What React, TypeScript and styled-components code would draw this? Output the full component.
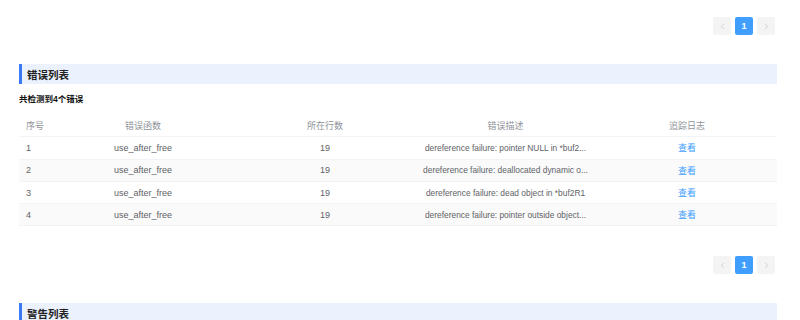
import React from 'react'
import styled, { createGlobalStyle } from 'styled-components'
import { ChevronLeft, ChevronRight } from 'lucide-react'

const GlobalStyle = createGlobalStyle`
  body {
    margin: 0;
    background: #fff;
    font-family: "Liberation Sans", "Noto Sans CJK SC", sans-serif;
  }
`

const Page = styled.div`
  padding: 17px 23px 0 19px;
`

const Pager = styled.div<{ $mb: number }>`
  display: flex;
  justify-content: flex-end;
  gap: 4px;
  padding-right: 2px;
  margin-bottom: ${(p) => p.$mb}px;
`

const PageBtn = styled.div<{ $active?: boolean }>`
  width: 18px;
  height: 18px;
  border-radius: 2px;
  display: flex;
  align-items: center;
  justify-content: center;
  font-size: 9px;
  font-weight: bold;
  background: ${(p) => (p.$active ? '#409eff' : '#f4f4f5')};
  color: ${(p) => (p.$active ? '#fff' : '#c0c4cc')};
`

const SectionTitle = styled.div`
  height: 20px;
  display: flex;
  align-items: center;
  padding-left: 5px;
  border-left: 3px solid #3a7af5;
  background: #ebf1fd;
  font-size: 10.5px;
  font-weight: bold;
  color: #222;
`

const Summary = styled.div`
  margin-top: 8px;
  line-height: 14px;
  font-size: 8.5px;
  font-weight: bold;
  color: #111;
`

const Table = styled.div`
  margin-top: 9px;
  margin-bottom: 30px;
`

const Row = styled.div<{ $striped?: boolean; $head?: boolean }>`
  display: grid;
  grid-template-columns: 31px 186px 178px 183px 180px;
  height: 22.3px;
  align-items: center;
  background: ${(p) => (p.$striped ? '#fafafa' : '#fff')};
  border-bottom: 1px solid #f2f3f6;
  font-size: 9px;
  color: ${(p) => (p.$head ? '#909399' : '#606266')};
  box-sizing: border-box;
`

const Cell = styled.div<{ $left?: boolean }>`
  padding: 0 ${(p) => (p.$left ? '0 0 7px' : '4px')};
  text-align: ${(p) => (p.$left ? 'left' : 'center')};
  white-space: nowrap;
`

const Desc = styled.span`
  font-size: 8.4px;
`

const Link = styled.span`
  color: #409eff;
  cursor: pointer;
`

const errors = [
  { fn: 'use_after_free', line: 19, desc: 'dereference failure: pointer NULL in *buf2...' },
  { fn: 'use_after_free', line: 19, desc: 'dereference failure: deallocated dynamic o...' },
  { fn: 'use_after_free', line: 19, desc: 'dereference failure: dead object in *buf2R1' },
  { fn: 'use_after_free', line: 19, desc: 'dereference failure: pointer outside object...' },
]

const Pagination = ({ mb }: { mb: number }) => (
  <Pager $mb={mb}>
    <PageBtn>
      <ChevronLeft size={9} strokeWidth={2} />
    </PageBtn>
    <PageBtn $active>1</PageBtn>
    <PageBtn>
      <ChevronRight size={9} strokeWidth={2} />
    </PageBtn>
  </Pager>
)

export default function App() {
  return (
    <>
      <GlobalStyle />
      <Page>
        <Pagination mb={29} />
        <SectionTitle>错误列表</SectionTitle>
        <Summary>共检测到4个错误</Summary>
        <Table>
          <Row $head>
            <Cell $left>序号</Cell>
            <Cell>错误函数</Cell>
            <Cell>所在行数</Cell>
            <Cell>错误描述</Cell>
            <Cell>追踪日志</Cell>
          </Row>
          {errors.map((e, i) => (
            <Row key={i} $striped={i % 2 === 1}>
              <Cell $left>{i + 1}</Cell>
              <Cell>{e.fn}</Cell>
              <Cell>{e.line}</Cell>
              <Cell>
                <Desc>{e.desc}</Desc>
              </Cell>
              <Cell>
                <Link>查看</Link>
              </Cell>
            </Row>
          ))}
        </Table>
        <Pagination mb={29} />
        <SectionTitle>警告列表</SectionTitle>
      </Page>
    </>
  )
}
